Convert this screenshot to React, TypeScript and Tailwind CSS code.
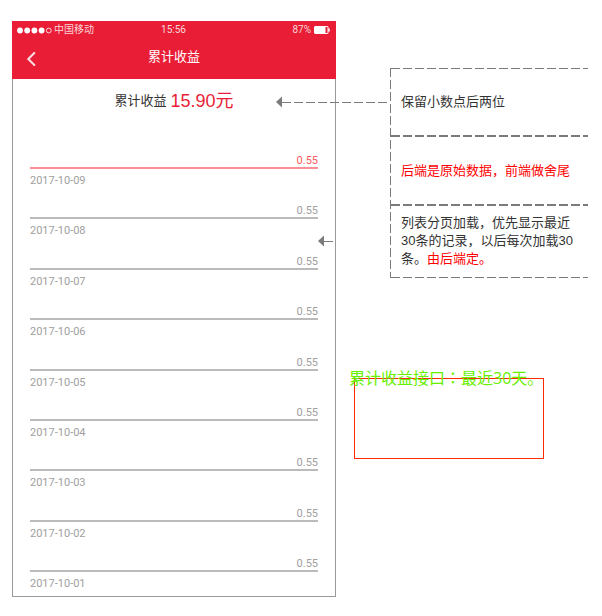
const days = ["09", "08", "07", "06", "05", "04", "03", "02", "01"];

const dashX =
  "h-px bg-[repeating-linear-gradient(90deg,#7b7b7b_0px,#7b7b7b_9px,transparent_9px,transparent_12px)]";
const dashY =
  "w-px bg-[repeating-linear-gradient(180deg,#7b7b7b_0px,#7b7b7b_9px,transparent_9px,transparent_12px)]";

function ArrowHead() {
  return (
    <svg className="h-3 w-[6px] shrink-0" viewBox="0 0 6 12" aria-hidden="true">
      <path d="M0 6 L6 0.5 V11.5 Z" fill="#7b7b7b" />
    </svg>
  );
}

function StatusBar() {
  return (
    <div className="flex h-[18px] items-center justify-between pr-[6px] pl-[5px] text-[10px] leading-[18px] text-[#fbd5d9]">
      <div className="flex flex-1 items-center">
        <svg className="mr-px h-[7px] w-[36px]" viewBox="0 0 36 7" aria-hidden="true">
          <g fill="#fff">
            <circle cx="3" cy="3.5" r="2.9" />
            <circle cx="10.2" cy="3.5" r="2.9" />
            <circle cx="17.4" cy="3.5" r="2.9" />
            <circle cx="24.6" cy="3.5" r="2.9" />
          </g>
          <circle cx="31.8" cy="3.5" r="2.4" fill="none" stroke="#fff" strokeWidth="0.8" />
        </svg>
        <span>中国移动</span>
      </div>
      <span className="font-['Roboto','Noto_Sans_CJK_SC',sans-serif]">15:56</span>
      <div className="flex flex-1 items-center justify-end gap-[3px]">
        <span className="font-['Roboto','Noto_Sans_CJK_SC',sans-serif]">87%</span>
        <svg className="h-[8px] w-[16px]" viewBox="0 0 16 8" aria-hidden="true">
          <rect x="0.5" y="0.5" width="13.5" height="7" rx="0.5" fill="none" stroke="#fff" />
          <rect x="1" y="1" width="10.5" height="6" fill="#fff" />
          <path d="M15 2.5 V5.5" stroke="#fff" strokeWidth="1.5" />
        </svg>
      </div>
    </div>
  );
}

function Phone() {
  return (
    <section className="relative flex min-h-[576px] flex-col border border-t-0 border-[#999]">
      <header className="-mx-px bg-[#e91e36]">
        <StatusBar />
        <div className="grid h-10 grid-cols-[40px_1fr_40px] items-center">
          <button type="button" aria-label="返回" className="flex h-10 items-center pl-[14px]">
            <svg className="h-[14px] w-[10px]" viewBox="0 0 10 14" aria-hidden="true">
              <path
                d="M8.3 1 L2.3 7 L8.3 13"
                fill="none"
                stroke="#fbdfe2"
                strokeWidth="2"
                strokeLinecap="round"
              />
            </svg>
          </button>
          <h1 className="pb-1 text-center text-[13px] leading-[18px] text-white">累计收益</h1>
        </div>
      </header>
      <p className="flex h-11 items-center justify-center gap-1 text-[13px] text-[#333]">
        累计收益
        <span className="text-[18px] leading-6 text-[#e91e36]">15.90元</span>
      </p>
      <ul className="flex flex-1 flex-col justify-between px-[17px] pt-8 pb-[5px] font-['Roboto',sans-serif] text-[11px] text-[#a0a0a0]">
        {days.map((day, i) => (
          <li key={day}>
            <div
              className={
                i === 0
                  ? "border-b-2 border-[#fb8f98] text-right leading-3 text-[#fa5a5f]"
                  : "border-b-2 border-[#bbb] text-right leading-3"
              }
            >
              0.55
            </div>
            <time dateTime={"2017-10-" + day} className="block pt-[5px] leading-[14px]">
              2017-10-{day}
            </time>
          </li>
        ))}
      </ul>
      <div className="absolute top-[75px] -right-[55px] flex w-[114px] items-center">
        <ArrowHead />
        <div className={dashX + " flex-1"} />
      </div>
      <div className="absolute top-[214px] right-0 flex w-[17px] items-center">
        <ArrowHead />
        <div className={dashX + " flex-1"} />
      </div>
    </section>
  );
}

function Notes() {
  return (
    <div className="mt-[47px] ml-[54px] flex text-[13px] leading-[18px] text-[#333]">
      <div className={dashY} />
      <div className="flex-1">
        <div className={dashX} />
        <p className="flex h-[66px] items-center pl-[10px]">保留小数点后两位</p>
        <div className={dashX} />
        <div className={dashX} />
        <p className="flex h-[67px] items-center pl-[10px] text-[#f00]">后端是原始数据，前端做舍尾</p>
        <div className={dashX} />
        <div className={dashX} />
        <p className="h-[71px] py-2 pr-3 pl-[10px]">
          列表分页加载，优先显示最近30条的记录，以后每次加载30条。
          <span className="text-[#f00]">由后端定。</span>
        </p>
        <div className={dashX} />
      </div>
    </div>
  );
}

export default function App() {
  return (
    <main className="grid min-h-screen grid-cols-[9fr_7fr] items-start bg-white pt-[21px] pr-[14px] pb-[19px] pl-3 font-['Liberation_Sans','Noto_Sans_CJK_SC',sans-serif]">
      <Phone />
      <aside>
        <Notes />
        <div className="relative mt-[100px] mr-11 ml-[18px] h-[81px] border border-[#ff2a00]">
          <p className="absolute -top-[14px] -left-[6px] font-['Open_Sans','Noto_Sans_CJK_SC',sans-serif] text-[16px] leading-6 whitespace-nowrap text-[#66f000]">
            累计收益接口
            <span lang="zh-TW" className="font-['Noto_Sans_CJK_TC',sans-serif]">：</span>
            最近30天。
          </p>
        </div>
      </aside>
    </main>
  );
}
